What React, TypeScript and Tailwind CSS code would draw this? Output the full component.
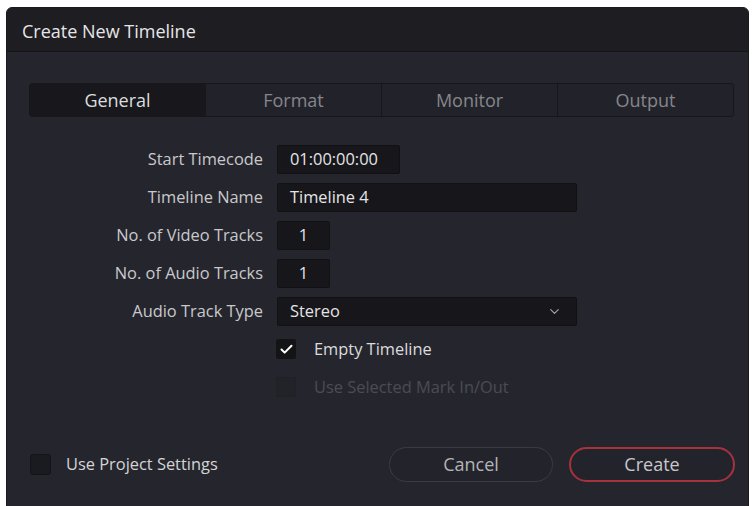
import { Check, ChevronDown } from 'lucide-react';

const tabs = ['General', 'Format', 'Monitor', 'Output'];

function Field({ label, children }: { label: string; children: React.ReactNode }) {
  return (
    <div className="flex items-center h-[29px]">
      <div className="w-[270px] shrink-0 pr-[14px] text-right text-[16.4px] text-[#c9c9cc] whitespace-nowrap">{label}</div>
      {children}
    </div>
  );
}

function Box({ w, value, center }: { w: string; value: string; center?: boolean }) {
  return (
    <div
      className={`${w} h-[29px] flex items-center rounded-[2px] bg-[#17171b] border border-[#111114] text-[16.4px] text-[#e4e4e6] ${
        center ? 'justify-center' : 'px-[12px]'
      }`}
    >
      {value}
    </div>
  );
}

export default function App() {
  return (
    <div className="w-[754px] h-[506px] bg-white pl-[6px] pr-[5px] pt-[7px] overflow-hidden" style={{ fontFamily: '"Open Sans", "Noto Sans", sans-serif' }}>
      <div className="h-[520px] rounded-t-[6px] bg-[#25262d] border border-[#1a1a1e] flex flex-col">
        {/* title bar */}
        <div className="h-[44px] shrink-0 flex items-center px-[15px] pt-[3px] bg-[#1d1d22] border-b border-[#141417] rounded-t-[6px]">
          <span className="text-[18px] text-[#e6e6e8]">Create New Timeline</span>
        </div>

        {/* tabs */}
        <div className="ml-[22px] mr-[14px] mt-[31px] h-[34px] flex rounded-[3px] border border-[#17171b] overflow-hidden">
          {tabs.map((t, i) => (
            <div
              key={t}
              className={`flex-1 flex items-center justify-center text-[18px] ${
                i === 0 ? 'bg-[#18181c] text-[#dcdcde]' : 'bg-[#22232a] text-[#86868b]'
              } ${i > 0 ? 'border-l border-[#17171b]' : ''}`}
            >
              {t}
            </div>
          ))}
        </div>

        {/* form */}
        <div className="mt-[28px] flex flex-col gap-[9px]">
          <Field label="Start Timecode">
            <Box w="w-[123px]" value="01:00:00:00" />
          </Field>
          <Field label="Timeline Name">
            <Box w="w-[300px]" value="Timeline 4" />
          </Field>
          <Field label="No. of Video Tracks">
            <Box w="w-[53px]" value="1" center />
          </Field>
          <Field label="No. of Audio Tracks">
            <Box w="w-[53px]" value="1" center />
          </Field>
          <Field label="Audio Track Type">
            <div className="w-[300px] h-[29px] flex items-center justify-between rounded-[2px] bg-[#17171b] border border-[#111114] pl-[12px] pr-[14px] text-[16.4px] text-[#e4e4e6]">
              <span>Stereo</span>
              <ChevronDown size={15} strokeWidth={2} className="text-[#a0a0a4]" />
            </div>
          </Field>
        </div>

        <div className="ml-[269px] mt-[13px] flex flex-col gap-[18px]">
          <div className="flex items-center h-[20px]">
            <div className="w-[20px] h-[20px] rounded-[2px] bg-[#141417] flex items-center justify-center">
              <Check size={15} strokeWidth={3.2} className="text-white" />
            </div>
            <span className="ml-[18px] text-[16.4px] text-[#dcdcde]">Empty Timeline</span>
          </div>
          <div className="flex items-center h-[20px]">
            <div className="w-[20px] h-[20px] rounded-[2px] bg-[#222329] border border-[#202126]" />
            <span className="ml-[18px] text-[16.4px] text-[#4b4c53]">Use Selected Mark In/Out</span>
          </div>
        </div>

        {/* footer */}
        <div className="mt-[50px] flex items-center pl-[23px] pr-[13px]">
          <div className="w-[21px] h-[21px] rounded-[3px] bg-[#1a1b20] border border-[#141417]" />
          <span className="ml-[15px] text-[16.4px] text-[#d4d4d6]">Use Project Settings</span>
          <div className="ml-auto flex gap-[16px]">
            <div className="w-[164px] h-[35px] rounded-full border border-[#3a3b44] bg-[#23242b] flex items-center justify-center text-[18px] text-[#b4b4b8]">
              Cancel
            </div>
            <div className="w-[166px] h-[35px] rounded-full border-2 border-[#a8313e] bg-[#23242b] flex items-center justify-center text-[18px] text-[#c8c8cc]">
              Create
            </div>
          </div>
        </div>
      </div>
    </div>
  );
}
